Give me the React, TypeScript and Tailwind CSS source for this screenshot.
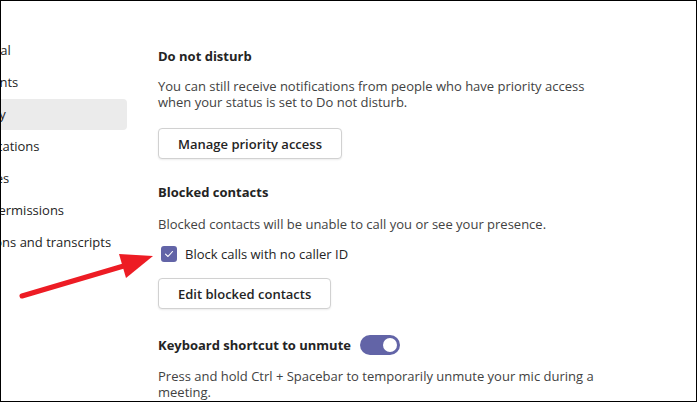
import { useState } from 'react';

const navItems = [
  { label: 'General' },
  { label: 'Accounts' },
  { label: 'Privacy', active: true },
  { label: 'Notifications' },
  { label: 'Devices' },
  { label: 'App permissions' },
  { label: 'Captions and transcripts' },
];

function SettingsButton({ children }: { children: React.ReactNode }) {
  return (
    <button className="h-[31px] px-[19px] rounded-[4px] border border-[#d1d1d1] bg-white text-[13px] font-semibold text-[#242424] shadow-[0_1px_2px_rgba(0,0,0,0.08)]">
      {children}
    </button>
  );
}

export default function App() {
  const [blockNoId, setBlockNoId] = useState(true);
  const [shortcut, setShortcut] = useState(true);

  return (
    <div
      className="relative w-[697px] h-[402px] overflow-hidden bg-white border border-black flex text-[#242424]"
      style={{ fontFamily: '"Segoe UI", "Open Sans", "Liberation Sans", sans-serif' }}
    >
      {/* Sidebar nav, scrolled off to the left */}
      <nav className="w-[126px] shrink-0 pt-[34px] flex flex-col gap-[1px] overflow-hidden">
        {navItems.map((item) => (
          <div
            key={item.label}
            className={`h-[31px] flex items-center rounded-r-[4px] overflow-hidden whitespace-nowrap text-[13px] ${
              item.active ? 'bg-[#ebebeb]' : ''
            }`}
          >
            <span className="ml-[-38px]">{item.label}</span>
          </div>
        ))}
      </nav>

      {/* Privacy settings */}
      <main className="flex-1 pl-[31px] pt-[45px] text-[13px] leading-[16px]">
        <h2 className="text-[13px] font-bold leading-[20px]">Do not disturb</h2>
        <p className="mt-[12px] text-[#424242]">
          You can still receive notifications from people who have priority access
          <br />
          when your status is set to Do not disturb.
        </p>
        <div className="mt-[18px]">
          <SettingsButton>Manage priority access</SettingsButton>
        </div>

        <h2 className="mt-[23px] text-[13px] font-bold leading-[20px]">Blocked contacts</h2>
        <p className="mt-[14px] text-[#424242]">
          Blocked contacts will be unable to call you or see your presence.
        </p>
        <label className="mt-[12px] flex items-center gap-[8px] cursor-pointer">
          <span
            onClick={() => setBlockNoId(!blockNoId)}
            className="ml-[3px] w-[16px] h-[16px] rounded-[3px] bg-[#6264a7] flex items-center justify-center"
          >
            {blockNoId && (
              <svg width="10" height="10" viewBox="0 0 10 10" fill="none">
                <path d="M1.5 5.2 L4 7.5 L8.5 2.5" stroke="white" strokeWidth="1.1" strokeLinecap="round" strokeLinejoin="round" />
              </svg>
            )}
          </span>
          <span className="text-[13px] leading-[20px] text-[#242424]">Block calls with no caller ID</span>
        </label>
        <div className="mt-[14px]">
          <SettingsButton>Edit blocked contacts</SettingsButton>
        </div>

        <div className="mt-[26px] flex items-center gap-[9px]">
          <h2 className="text-[13px] font-bold leading-[20px]">Keyboard shortcut to unmute</h2>
          <button
            onClick={() => setShortcut(!shortcut)}
            className={`w-[40px] h-[20px] rounded-full flex items-center px-[3px] ${
              shortcut ? 'bg-[#6264a7] justify-end' : 'bg-white border border-[#616161] justify-start'
            }`}
          >
            <span className="w-[14px] h-[14px] rounded-full bg-white" />
          </button>
        </div>
        <p className="mt-[13px] text-[#424242]">
          Press and hold Ctrl + Spacebar to temporarily unmute your mic during a
          <br />
          meeting.
        </p>
      </main>

      {/* Red annotation arrow */}
      <svg className="absolute left-0 top-0 pointer-events-none" width="697" height="402">
        <line x1="21" y1="295" x2="126" y2="264" stroke="#ed1c24" strokeWidth="5" strokeLinecap="round" />
        <polygon points="152,255 118,253 125,277" fill="#ed1c24" />
      </svg>
    </div>
  );
}
